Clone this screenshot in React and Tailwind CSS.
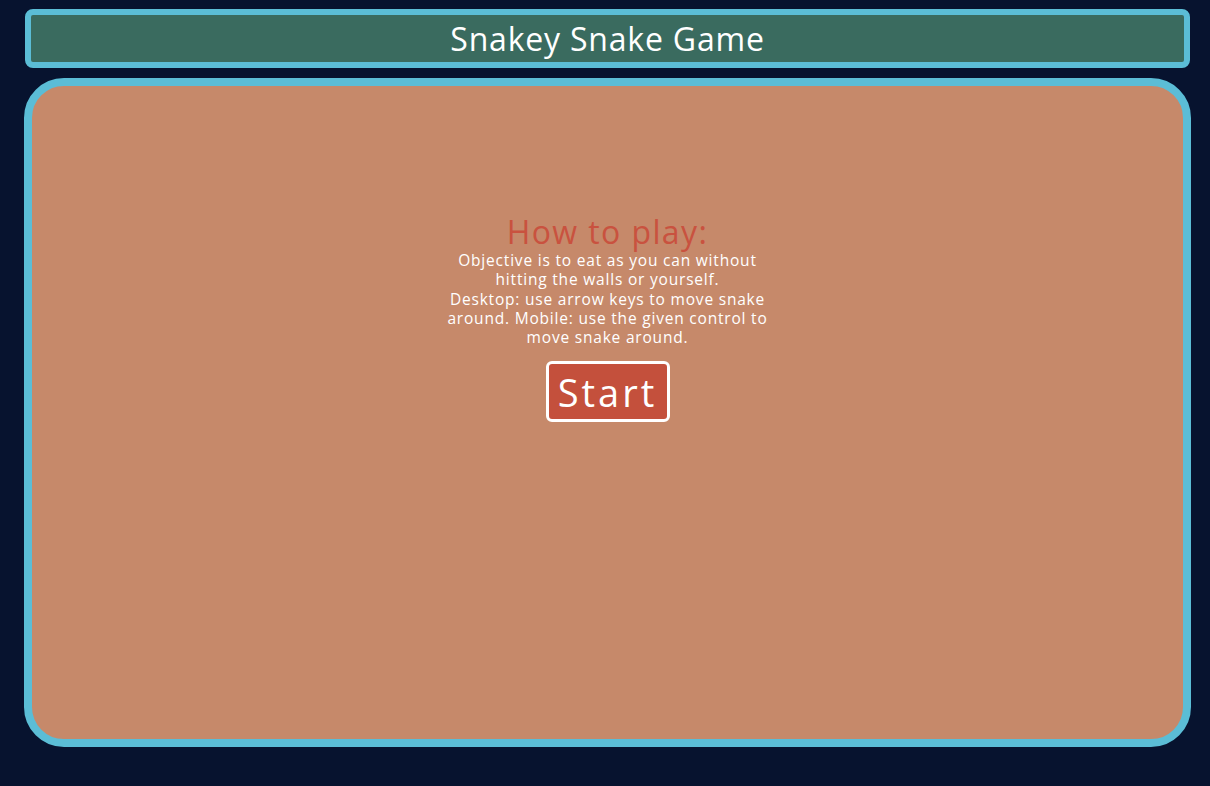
export default function App() {
  return (
    <div
      className="w-full h-[786px] bg-[#07132f] pt-[9px] pl-[24px] pr-[19px] flex flex-col gap-[10px]"
      style={{ fontFamily: '"Open Sans", "Liberation Sans", sans-serif' }}
    >
      <header className="mx-[1px] h-[59px] border-[6px] border-[#5bbdd6] rounded-[8px] bg-[#3a6b5f] flex items-center justify-center">
        <h1 className="text-white text-[32px] leading-none tracking-[0.8px]">Snakey Snake Game</h1>
      </header>
      <main className="h-[669px] border-[8px] border-[#5bbdd6] rounded-[40px] bg-[#c6896a] flex flex-col items-center pt-[127px]">
        <h2 className="text-[#c9523f] text-[32px] leading-[38px] tracking-[1.4px]">How to play:</h2>
        <p className="text-center text-white text-[15.5px] leading-[19.3px] tracking-[0.8px] whitespace-nowrap">
          <span className="block">Objective is to eat as you can without</span>
          <span className="block">hitting the walls or yourself.</span>
          <span className="block">Desktop: use arrow keys to move snake</span>
          <span className="block">around. Mobile: use the given control to</span>
          <span className="block">move snake around.</span>
        </p>
        <button className="mt-[14px] w-[124px] h-[61px] border-[3px] border-white rounded-[6px] bg-[#c4503c] text-white text-[38px] leading-none tracking-[3px] flex items-center justify-center">
          Start
        </button>
      </main>
    </div>
  );
}
